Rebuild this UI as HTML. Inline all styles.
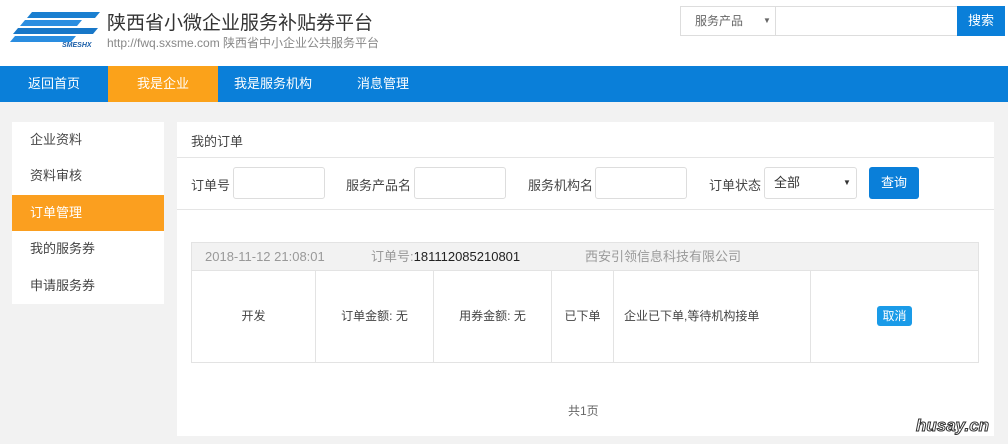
<!DOCTYPE html>
<html><head><meta charset="utf-8"><style>
*{margin:0;padding:0;box-sizing:border-box}
body{width:1008px;height:444px;overflow:hidden;background:#f2f2f2;font-family:"Liberation Sans","Noto Sans CJK SC",sans-serif;color:#333;font-size:13px;position:relative}
.abs{position:absolute}
.hdr{left:0;top:0;width:1008px;height:66px;background:#fff}
.nav{left:0;top:66px;width:1008px;height:36px;background:#0a7fd9}
.nav span{position:absolute;top:0;height:36px;line-height:36px;color:#fff;font-size:13px;text-align:center}
.side{left:12px;top:122px;width:152px;height:182px;background:#fff}
.side div{height:36.4px;line-height:36px;padding-left:18px;font-size:13px;color:#444}
.main{left:177px;top:122px;width:817px;height:314px;background:#fff}
.inp{position:absolute;border:1px solid #ddd;border-radius:3px;background:#fff;height:32px}
.lbl{position:absolute;font-size:13px;color:#444}
.cell{position:absolute;top:271px;height:91px;border-right:1px solid #e3e3e3;font-size:12px;color:#444;line-height:91px;text-align:center}
</style></head><body>
<div class="abs hdr"></div>
<svg class="abs" style="left:10px;top:10px" width="92" height="38" viewBox="0 0 92 38">
<path d="M22 2 H90 L85 8 H17 Z" fill="#1a7fd0"/>
<path d="M15 10 H72 L67 16 H10 Z" fill="#2a8de0"/>
<path d="M8 18 H88 L83 24 H3 Z" fill="#1877c8"/>
<path d="M5 26 H66 L61 32 H0 Z" fill="#2a8de0"/>
<text x="52" y="37" font-size="7" font-weight="bold" font-style="italic" fill="#1a5ea8" font-family="Liberation Sans">SMESHX</text>
</svg>
<div class="abs" style="left:107px;top:8px;font-size:19px;color:#333">陕西省小微企业服务补贴券平台</div>
<div class="abs" style="left:107px;top:34px;font-size:12px;color:#888">http://fwq.sxsme.com 陕西省中小企业公共服务平台</div>
<div class="abs" style="left:680px;top:6px;width:96px;height:30px;border:1px solid #ddd;background:#fff;font-size:12px;color:#666;line-height:28px;padding-left:14px">服务产品<span style="position:absolute;left:82px;font-size:8px">▼</span></div>
<div class="abs" style="left:775px;top:6px;width:183px;height:30px;border:1px solid #ddd;background:#fff"></div>
<div class="abs" style="left:957px;top:6px;width:48px;height:30px;background:#0a7fd9;color:#fff;text-align:center;line-height:30px;font-size:13px">搜索</div>
<div class="abs nav">
<span style="left:0;width:108px">返回首页</span>
<span style="left:108px;width:110px;background:#fba21a">我是企业</span>
<span style="left:218px;width:110px">我是服务机构</span>
<span style="left:328px;width:110px">消息管理</span>
</div>
<div class="abs side">
<div>企业资料</div><div>资料审核</div><div style="background:#fb9f1f;color:#fff">订单管理</div><div>我的服务券</div><div>申请服务券</div>
</div>
<div class="abs main"></div>
<div class="lbl" style="left:191px;top:131px">我的订单</div>
<div class="abs" style="left:177px;top:157px;width:817px;height:1px;background:#e5e5e5"></div>
<div class="lbl" style="left:191px;top:175px">订单号</div>
<div class="inp" style="left:233px;top:167px;width:92px"></div>
<div class="lbl" style="left:346px;top:175px">服务产品名</div>
<div class="inp" style="left:414px;top:167px;width:92px"></div>
<div class="lbl" style="left:528px;top:175px">服务机构名</div>
<div class="inp" style="left:595px;top:167px;width:92px"></div>
<div class="lbl" style="left:709px;top:175px">订单状态</div>
<div class="inp" style="left:764px;top:167px;width:93px;font-size:13px;line-height:30px;padding-left:9px;color:#333">全部<span style="position:absolute;left:78px;font-size:8px">▼</span></div>
<div class="abs" style="left:869px;top:167px;width:50px;height:32px;background:#0a7fd9;border-radius:3px;color:#fff;text-align:center;line-height:32px">查询</div>
<div class="abs" style="left:177px;top:209px;width:817px;height:1px;background:#e5e5e5"></div>
<div class="abs" style="left:191px;top:242px;width:788px;height:121px;border:1px solid #e3e3e3"></div>
<div class="abs" style="left:192px;top:243px;width:786px;height:28px;background:#f2f2f2;border-bottom:1px solid #e3e3e3;font-size:13px;line-height:28px;color:#999">
<span class="abs" style="left:13px">2018-11-12 21:08:01</span>
<span class="abs" style="left:179px">订单号:<span style="color:#222">181112085210801</span></span>
<span class="abs" style="left:393px">西安引领信息科技有限公司</span></div>
<div class="cell" style="left:192px;width:124px">开发</div>
<div class="cell" style="left:316px;width:118px">订单金额: 无</div>
<div class="cell" style="left:434px;width:118px">用券金额: 无</div>
<div class="cell" style="left:552px;width:62px">已下单</div>
<div class="cell" style="left:614px;width:197px;text-align:left;padding-left:10px">企业已下单,等待机构接单</div>
<div class="abs" style="left:877px;top:306px;width:35px;height:20px;background:#1a9be8;border-radius:3px;color:#fff;font-size:12px;text-align:center;line-height:20px">取消</div>
<div class="abs" style="left:568px;top:402px;font-size:12px;color:#666">共1页</div>
<div class="abs" style="left:916px;top:416px;font-size:17px;font-weight:bold;font-style:italic;color:#fff;-webkit-text-stroke:1px #333">husay.cn</div>
</body></html>
